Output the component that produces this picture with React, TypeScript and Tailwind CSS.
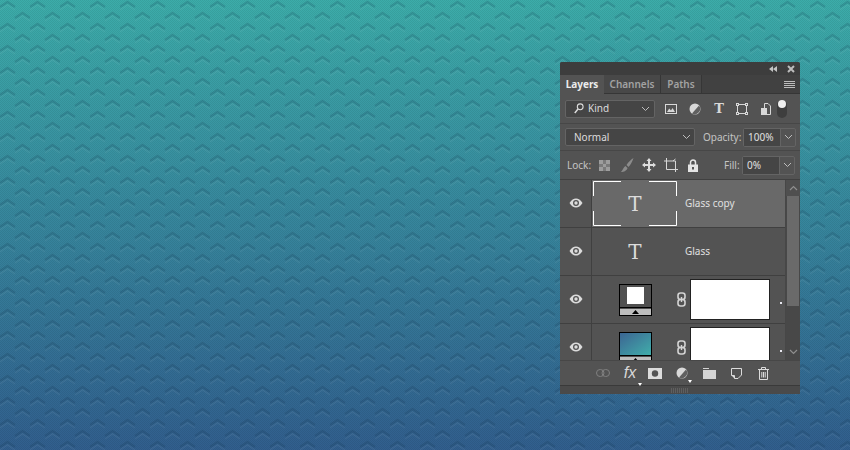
import React from "react";

const ui = "font-['Noto_Sans',sans-serif]";

function Chevron() {
  return (
    <svg width="9" height="6" viewBox="0 0 9 6" className="shrink-0">
      <path d="M1 1l3.5 3.5L8 1" fill="none" stroke="#bdbdbd" strokeWidth="1" />
    </svg>
  );
}

function Eye() {
  return (
    <svg width="14" height="10" viewBox="0 0 14 10">
      <path d="M0.5 5C2.5 1.8 4.6 0.5 7 0.5S11.5 1.8 13.5 5C11.5 8.2 9.4 9.5 7 9.5S2.5 8.2 0.5 5Z" fill="#dcdcdc" />
      <circle cx="7" cy="5" r="3" fill="#535353" />
      <circle cx="7" cy="5" r="1.7" fill="#dcdcdc" />
    </svg>
  );
}

function LinkIcon() {
  return (
    <svg width="9" height="15" viewBox="0 0 9 15">
      <rect x="1" y="1" width="7" height="6.5" rx="2.5" fill="none" stroke="#d4d4d4" strokeWidth="1.6" />
      <rect x="1" y="7.5" width="7" height="6.5" rx="2.5" fill="none" stroke="#d4d4d4" strokeWidth="1.6" />
      <path d="M4.5 5v5" stroke="#d4d4d4" strokeWidth="1.4" />
    </svg>
  );
}

function TypeThumb() {
  return <span className="font-['DejaVu_Serif',serif] text-[20px] leading-none text-[#dcdcdc]">T</span>;
}

function Dot() {
  return <span className="ml-auto mr-[3px] mt-[7px] h-[2px] w-[2px] bg-[#e8e8f0]" />;
}

function AdjThumb({ gradient }: { gradient?: boolean }) {
  return (
    <div className="flex h-[32px] w-[33px] flex-col border border-black bg-[#505050]">
      {gradient ? (
        <div className="h-[22px] bg-gradient-to-br from-[#3b6592] to-[#40aeaa]" />
      ) : (
        <div className="flex h-[22px] justify-center pt-[2px]">
          <div className="h-[17px] w-[17px] bg-white" />
        </div>
      )}
      <div className="h-px bg-black" />
      <div className="mt-px flex flex-1 items-end justify-center bg-[#bdbdbd]">
        <svg width="7" height="4" viewBox="0 0 7 4" className="mb-px">
          <path d="M3.5 0L7 4H0Z" fill="#000" />
        </svg>
      </div>
    </div>
  );
}

function Row({
  selected,
  label,
  thumb,
  mask,
}: {
  selected?: boolean;
  label?: string;
  thumb: React.ReactNode;
  mask?: boolean;
}) {
  return (
    <div className="flex h-[48px] shrink-0 border-b border-[#404040]">
      <div className="flex w-[32px] shrink-0 items-center justify-center border-r border-[#404040] pb-px">
        <Eye />
      </div>
      <div className={`flex flex-1 items-center ${selected ? "bg-[#696969]" : ""}`}>
        <div className="relative flex h-[47px] w-[86px] shrink-0 items-center justify-center">
          {thumb}
          {selected && (
            <svg width="84" height="45" viewBox="0 0 84 45" className="absolute left-px top-px">
              <path
                d="M.5 15V.5H28M56 .5H83.5V15M83.5 30V44.5H56M28 44.5H.5V30"
                fill="none"
                stroke="#fff"
                strokeWidth="1"
              />
            </svg>
          )}
        </div>
        {label && <span className="ml-[7px] text-[10px] text-[#e0e0e0]">{label}</span>}
        {mask && (
          <>
            <div className="-ml-[1px] pr-[4px]">
              <LinkIcon />
            </div>
            <div className="h-[41px] w-[80px] shrink-0 self-center border border-[#222] bg-white" />
            <Dot />
          </>
        )}
      </div>
    </div>
  );
}

function Texture() {
  return (
    <svg className="absolute inset-0" width="850" height="450">
      <defs>
        <pattern id="mesh" width="2" height="2" patternUnits="userSpaceOnUse">
          <rect x="0" y="0" width="1" height="1" fill="#000" fillOpacity=".07" />
          <rect x="1" y="1" width="1" height="1" fill="#000" fillOpacity=".07" />
        </pattern>
        <pattern id="chev" width="30" height="22" patternUnits="userSpaceOnUse">
          <path
            d="M0 7L7.5 2L15 7M15 18L22.5 13L30 18"
            fill="none"
            stroke="#0a2a44"
            strokeOpacity=".16"
            strokeWidth="2.5"
          />
          <path
            d="M0 10L7.5 5L15 10M15 21L22.5 16L30 21"
            fill="none"
            stroke="#fff"
            strokeOpacity=".05"
            strokeWidth="1.5"
          />
        </pattern>
      </defs>
      <rect width="850" height="450" fill="url(#chev)" />
      <rect width="850" height="450" fill="url(#mesh)" />
    </svg>
  );
}

export default function App() {
  return (
    <div
      className={`relative flex h-[450px] w-[850px] items-start justify-end overflow-hidden bg-gradient-to-b from-[#3cadaa] to-[#315f8e] pr-[50px] pt-[62px] ${ui}`}
    >
      <Texture />
      <div className="relative flex h-[332px] w-[240px] flex-col overflow-hidden rounded-t-[2px] bg-[#535353] text-[#d8d8d8]">
        {/* title bar */}
        <div className="flex h-[13px] shrink-0 items-center justify-end gap-[10px] bg-[#3d3d3d] pr-[5px]">
          <svg width="8" height="6" viewBox="0 0 8 6">
            <path d="M4 0v6L0 3ZM8 0v6L4 3Z" fill="#c4c4c4" />
          </svg>
          <svg width="8" height="8" viewBox="0 0 8 8">
            <path d="M1 1l6 6M7 1l-6 6" stroke="#bdbdbd" strokeWidth="2" />
          </svg>
        </div>
        {/* tabs */}
        <div className="flex h-[19px] shrink-0 items-stretch bg-[#414141] text-[10px] font-semibold">
          <div className="flex w-[44px] items-center justify-center bg-[#535353] font-bold text-[#ececec]">Layers</div>
          <div className="flex w-[57px] items-center justify-center border-b border-r border-[#363636] bg-[#484848] text-[#a2a2a2]">
            Channels
          </div>
          <div className="flex w-[41px] items-center justify-center border-b border-r border-[#363636] bg-[#484848] text-[#a2a2a2]">
            Paths
          </div>
          <div className="flex flex-1 items-center justify-end border-b border-[#363636] pr-[5px]">
            <svg width="11" height="7" viewBox="0 0 11 7">
              <path d="M0 .5h11M0 2.5h11M0 4.5h11M0 6.5h11" stroke="#bcbcbc" />
            </svg>
          </div>
        </div>
        {/* filter */}
        <div className="flex h-[30px] shrink-0 items-center border-b border-[#474747] pl-[5px]">
          <div className="flex h-[18px] w-[90px] items-center rounded-[2px] border border-[#646464] bg-[#454545] pl-[8px] pr-[4px] text-[10px] text-[#dcdcdc]">
            <svg width="10" height="11" viewBox="0 0 10 11">
              <circle cx="6.2" cy="3.8" r="2.9" fill="none" stroke="#dcdcdc" strokeWidth="1.1" />
              <path d="M4 6L.8 10" stroke="#dcdcdc" strokeWidth="1.5" />
            </svg>
            <span className="ml-[4px] flex-1">Kind</span>
            <Chevron />
          </div>
          <div className="ml-[9px] flex items-center">
            <div className="flex w-[14px] justify-center">
              <svg width="12" height="10" viewBox="0 0 12 10">
                <rect x=".5" y=".5" width="11" height="9" fill="none" stroke="#d8d8d8" />
                <path d="M2 8l2.2-3.5L6 6.5l1.5-2.5L10 8Z" fill="#d8d8d8" />
              </svg>
            </div>
            <div className="ml-[10px] flex w-[14px] justify-center">
              <svg width="12" height="12" viewBox="0 0 12 12">
                <circle cx="6" cy="6" r="5.5" fill="#d8d8d8" />
                <path d="M10 2.4A5.5 5.5 0 0 1 3 10.6Z" fill="#606060" />
              </svg>
            </div>
            <span className="ml-[10px] flex w-[14px] justify-center font-['DejaVu_Serif',serif] text-[13px] font-bold leading-none text-[#d8d8d8]">
              T
            </span>
            <div className="ml-[9px] flex w-[14px] justify-center">
              <svg width="12" height="12" viewBox="0 0 12 12">
                <rect x="1.5" y="1.5" width="9" height="9" fill="none" stroke="#d8d8d8" />
                <path d="M0 0h3v3H0ZM9 0h3v3H9ZM0 9h3v3H0ZM9 9h3v3H9Z" fill="#d8d8d8" />
                <path d="M1 1h1v1H1ZM10 1h1v1h-1ZM1 10h1v1H1ZM10 10h1v1h-1Z" fill="#535353" />
              </svg>
            </div>
            <div className="ml-[10px] flex w-[14px] justify-center">
              <svg width="10" height="12" viewBox="0 0 10 12">
                <path d="M3.5.5H7L9.5 3V11.5H3.5Z" fill="none" stroke="#d8d8d8" />
                <rect y="5" width="6" height="7" fill="#d8d8d8" />
              </svg>
            </div>
            <div className="relative ml-[4px] h-[18px] w-[10px] rounded-full bg-[#3e3e3e]">
              <div className="absolute left-[1px] top-0 h-[8px] w-[8px] rounded-full bg-[#efefef]" />
            </div>
          </div>
        </div>
        {/* blend */}
        <div className="flex h-[27px] shrink-0 items-center border-b border-[#474747] pl-[5px] text-[10px]">
          <div className="flex h-[18px] w-[130px] items-center justify-between rounded-[2px] border border-[#646464] bg-[#454545] pl-[8px] pr-[3px] text-[#dcdcdc]">
            <span>Normal</span>
            <Chevron />
          </div>
          <span className="ml-[8px] w-[40px] text-[#c4c4c4]">Opacity:</span>
          <div className="flex h-[19px] w-[53px] items-stretch rounded-[2px] border border-[#646464]">
            <span className="flex w-[36px] items-center bg-[#454545] pl-[4px] text-[#e0e0e0]">100%</span>
            <span className="flex flex-1 items-center justify-center border-l border-[#646464]">
              <Chevron />
            </span>
          </div>
        </div>
        {/* lock */}
        <div className="flex h-[28px] shrink-0 items-center pl-[7px] text-[10px]">
          <span className="w-[28px] text-[#c4c4c4]">Lock:</span>
          <div className="ml-[4px] flex w-[11px] justify-center">
            <svg width="11" height="11" viewBox="0 0 11 11">
              <rect width="11" height="11" fill="#7a7a7a" />
              <path d="M0 0h4v4H0ZM7 0h4v4H7ZM4 4h3v3H4ZM0 7h4v4H0ZM7 7h4v4H7Z" fill="#9d9d9d" />
            </svg>
          </div>
          <div className="ml-[11px] flex w-[13px] justify-center">
            <svg width="13" height="14" viewBox="0 0 13 14">
              <path d="M12.5 0C10 1.5 7.5 4 5.5 7L7.5 9C9.5 7 11.5 3.5 12.5 0ZM4.5 8C2.5 9 2.5 11 0 14C3 14 6 12.5 6.5 10Z" fill="#8b8b8b" />
            </svg>
          </div>
          <div className="ml-[8px] flex w-[14px] justify-center">
            <svg width="14" height="14" viewBox="0 0 14 14">
              <path d="M7 0l2.5 3H8v3h3V4.5L14 7l-3 2.500V8H8v3h1.500L7 14l-2.500-3H6V8H3v1.500L0 7l3-2.500V6h3V3H4.500Z" fill="#dcdcdc" />
            </svg>
          </div>
          <div className="ml-[8px] flex w-[14px] justify-center">
            <svg width="14" height="14" viewBox="0 0 14 14">
              <path d="M2.500 0v11.500H14M0 3h11.500V14" fill="none" stroke="#d8d8d8" />
              <path d="M9 3l2.500-2" stroke="#d8d8d8" strokeWidth="1" />
            </svg>
          </div>
          <div className="ml-[9px] flex w-[12px] justify-center">
            <svg width="10" height="13" viewBox="0 0 10 13">
              <path d="M2.500 6V3.500a2.500 2.500 0 0 1 5 0V6" fill="none" stroke="#e4e4e4" strokeWidth="1.500" />
              <rect y="5.500" width="10" height="7.500" fill="#e4e4e4" />
              <rect x="4" y="8" width="2" height="2.500" fill="#535353" />
            </svg>
          </div>
          <span className="ml-[25px] w-[18px] text-[#c4c4c4]">Fill:</span>
          <div className="flex h-[19px] w-[53px] items-stretch rounded-[2px] border border-[#646464]">
            <span className="flex w-[36px] items-center bg-[#454545] pl-[4px] text-[#e0e0e0]">0%</span>
            <span className="flex flex-1 items-center justify-center border-l border-[#646464]">
              <Chevron />
            </span>
          </div>
        </div>
        {/* list */}
        <div className="flex h-[181px] shrink-0 overflow-hidden border-t border-[#404040]">
          <div className="flex min-w-0 flex-1 flex-col">
            <Row selected label="Glass copy" thumb={<TypeThumb />} />
            <Row label="Glass" thumb={<TypeThumb />} />
            <Row mask thumb={<AdjThumb />} />
            <Row mask thumb={<AdjThumb gradient />} />
          </div>
          <div className="flex w-[15px] shrink-0 flex-col items-center border-l border-[#474747] bg-[#484848]">
            <div className="flex h-[16px] w-full items-center justify-center bg-[#4f4f4f]">
              <svg width="9" height="6" viewBox="0 0 9 6">
                <path d="M1 5l3.500-3.500L8 5" fill="none" stroke="#8f8f8f" strokeWidth="1.200" />
              </svg>
            </div>
            <div className="h-[110px] w-[12px] bg-[#6a6a6a]" />
            <div className="mt-auto flex h-[17px] w-full items-center justify-center">
              <svg width="9" height="6" viewBox="0 0 9 6">
                <path d="M1 1l3.500 3.500L8 1" fill="none" stroke="#8f8f8f" strokeWidth="1.200" />
              </svg>
            </div>
          </div>
        </div>
        {/* footer */}
        <div className="flex h-[25px] shrink-0 items-center border-t border-[#474747] pl-[36px]">
          <div className="flex w-[14px] justify-center">
            <svg width="14" height="8" viewBox="0 0 14 8">
              <rect x=".5" y=".5" width="7.500" height="7" rx="3.500" fill="none" stroke="#808080" />
              <rect x="6" y=".5" width="7.500" height="7" rx="3.500" fill="none" stroke="#808080" />
            </svg>
          </div>
          <span className="relative ml-[12px] flex w-[16px] justify-center font-['Liberation_Sans',sans-serif] text-[16px] italic leading-none text-[#d8d8d8]">
            fx
            <span className="absolute -bottom-[5px] right-[-4px] h-0 w-0 border-x-[2px] border-t-[3px] border-x-transparent border-t-white" />
          </span>
          <div className="ml-[10px] flex w-[14px] justify-center">
            <svg width="14" height="11" viewBox="0 0 14 11">
              <rect width="14" height="11" fill="#dcdcdc" />
              <circle cx="7" cy="5.500" r="3.200" fill="#535353" />
            </svg>
          </div>
          <div className="relative ml-[13px] flex w-[14px] justify-center">
            <svg width="12" height="12" viewBox="0 0 12 12">
              <circle cx="6" cy="6" r="5.500" fill="#d8d8d8" />
              <path d="M10 2.400A5.500 5.500 0 0 1 3 10.600Z" fill="#606060" />
            </svg>
            <span className="absolute -bottom-[4px] right-[-3px] h-0 w-0 border-x-[2px] border-t-[3px] border-x-transparent border-t-white" />
          </div>
          <div className="ml-[13px] flex w-[14px] justify-center">
            <svg width="13" height="11" viewBox="0 0 13 11">
              <path d="M0 0H6V1H0ZM0 2H13V11H0Z" fill="#d4d4d4" />
            </svg>
          </div>
          <div className="ml-[13px] flex w-[14px] justify-center">
            <svg width="11" height="11" viewBox="0 0 11 11">
              <path d="M.5 .5H10.500V7L7 10.500H3.500V7.500H.5Z" fill="none" stroke="#dcdcdc" />
              <rect x=".5" y="7" width="3" height="3.500" fill="#dcdcdc" opacity="0" />
              <path d="M3 7.500H.5L3.500 10.500Z" fill="#dcdcdc" />
            </svg>
          </div>
          <div className="ml-[13px] flex w-[14px] justify-center">
            <svg width="11" height="13" viewBox="0 0 11 13">
              <path d="M0 2.500H11M3.500 2.500V.5H7.500V2.500M1.500 2.500V12.500H9.500V2.500M3.800 5V10.500M5.500 5V10.500M7.200 5V10.500" fill="none" stroke="#dcdcdc" />
            </svg>
          </div>
        </div>
        {/* grip */}
        <div className="flex flex-1 items-center justify-center border-t border-[#3a3a3a] bg-[#4a4a4a]">
          <svg width="18" height="5" viewBox="0 0 18 5">
            <path d="M.5 0v5M2.500 0v5M4.500 0v5M6.500 0v5M8.500 0v5M10.500 0v5M12.500 0v5M14.500 0v5M16.500 0v5" stroke="#5f5f5f" />
          </svg>
        </div>
      </div>
    </div>
  );
}
